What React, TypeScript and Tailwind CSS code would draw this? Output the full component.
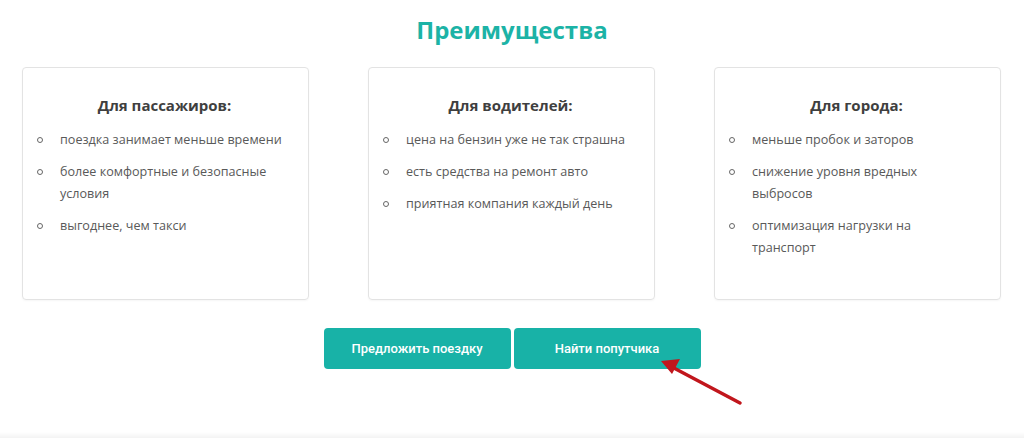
import React from "react";

const cards = [
  {
    title: "Для пассажиров:",
    items: [
      "поездка занимает меньше времени",
      "более комфортные и безопасные условия",
      "выгоднее, чем такси",
    ],
  },
  {
    title: "Для водителей:",
    items: [
      "цена на бензин уже не так страшна",
      "есть средства на ремонт авто",
      "приятная компания каждый день",
    ],
  },
  {
    title: "Для города:",
    items: [
      "меньше пробок и заторов",
      "снижение уровня вредных выбросов",
      "оптимизация нагрузки на транспорт",
    ],
  },
];

export default function App() {
  return (
    <div
      className="relative w-[1024px] h-[438px] bg-white overflow-hidden"
      style={{ fontFamily: '"Open Sans", "Liberation Sans", sans-serif' }}
    >
      <h1 className="pt-[12px] text-center text-[24px] leading-[36px] font-bold text-[#1cb3a6]">
        Преимущества
      </h1>
      <div className="mt-[19px] px-[22px] flex gap-[59px]">
        {cards.map((c, i) => (
          <div
            key={i}
            className="w-[287px] h-[233px] border border-[#e3e3e3] rounded-[4px] shadow-[0_1px_2px_rgba(0,0,0,0.04)] pt-[26px] pl-[14px] pr-[14px]"
          >
            <h3 className="text-center text-[15px] leading-[22px] font-bold text-[#3f3f3f] pr-[2px]">
              {c.title}
            </h3>
            <ul className="mt-[13px] flex flex-col gap-[10px]">
              {c.items.map((t, j) => (
                <li key={j} className="flex text-[12.6px] leading-[22px] text-[#595959]">
                  <span className="w-[23px] shrink-0 flex items-center h-[22px]">
                    <span className="block w-[6px] h-[6px] rounded-full border border-[#666]" />
                  </span>
                  <span className="max-w-[225px]">{t}</span>
                </li>
              ))}
            </ul>
          </div>
        ))}
      </div>
      <div
        className="mt-[28px] flex justify-center gap-[3px]"
        style={{ fontFamily: 'Roboto, "Liberation Sans", sans-serif' }}
      >
        <button className="w-[187px] h-[41px] rounded-[4px] bg-[#18b2a7] text-white text-[13px] font-medium">
          Предложить поездку
        </button>
        <button className="w-[187px] h-[41px] rounded-[4px] bg-[#18b2a7] text-white text-[13px] font-medium">
          Найти попутчика
        </button>
      </div>
      <div className="absolute left-0 right-0 bottom-0 h-[6px] bg-gradient-to-b from-white to-[#f3f3f3]" />
      <svg
        className="absolute left-0 top-0 pointer-events-none"
        width="1024"
        height="438"
        viewBox="0 0 1024 438"
      >
        <line x1="740" y1="403" x2="672" y2="367" stroke="#c1161c" strokeWidth="3.5" strokeLinecap="round" />
        <polygon points="661,361 680,359 672,374" fill="#c1161c" />
      </svg>
    </div>
  );
}
